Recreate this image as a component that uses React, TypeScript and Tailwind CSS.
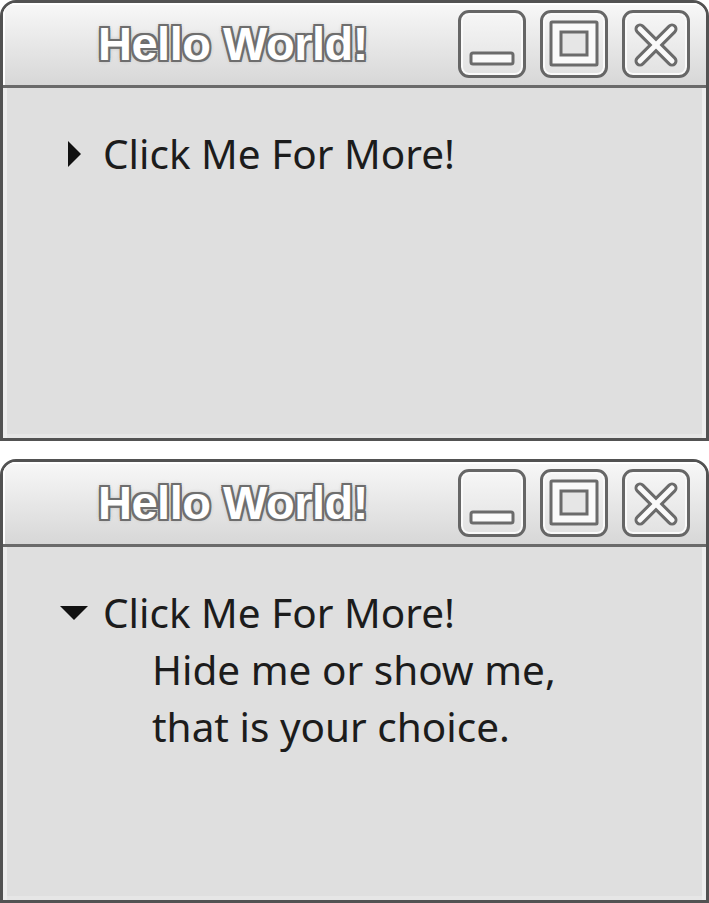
import React from 'react';

const outline =
  '[text-shadow:2px_0_0_#6e6e6e,-2px_0_0_#6e6e6e,0_2px_0_#6e6e6e,0_-2px_0_#6e6e6e,2px_2px_0_#6e6e6e,-2px_-2px_0_#6e6e6e,2px_-2px_0_#6e6e6e,-2px_2px_0_#6e6e6e,0_0_5px_#8a8a8a]';

function MinIcon() {
  return (
    <svg width="62" height="62" viewBox="0 0 62 62">
      <rect x="10" y="40" width="42" height="11" rx="2" fill="#fafafa" stroke="#6b6b6b" strokeWidth="3" />
    </svg>
  );
}

function MaxIcon() {
  return (
    <svg width="62" height="62" viewBox="0 0 62 62">
      <rect x="8" y="9" width="46" height="43" rx="1" fill="#fafafa" stroke="#6b6b6b" strokeWidth="3" />
      <rect x="18" y="19" width="26" height="23" fill="#e6e6e6" stroke="#6b6b6b" strokeWidth="3" />
    </svg>
  );
}

function CloseIcon() {
  return (
    <svg width="62" height="62" viewBox="0 0 62 62">
      <g stroke="#6b6b6b" strokeWidth="11" strokeLinecap="round">
        <line x1="15" y1="16" x2="47" y2="48" />
        <line x1="47" y1="16" x2="15" y2="48" />
      </g>
      <g stroke="#fafafa" strokeWidth="5" strokeLinecap="round">
        <line x1="15" y1="16" x2="47" y2="48" />
        <line x1="47" y1="16" x2="15" y2="48" />
      </g>
    </svg>
  );
}

function TitleButton({ children }: { children: React.ReactNode }) {
  return (
    <div className="w-[68px] h-[68px] rounded-[11px] border-[3px] border-[#666] bg-gradient-to-b from-[#f6f6f6] to-[#e2e2e2] flex items-center justify-center shadow-[inset_0_0_0_2px_#fafafa]">
      {children}
    </div>
  );
}

function Window({ expanded, className }: { expanded: boolean; className: string }) {
  return (
    <div className={`flex flex-col border-[3px] border-[#525252] rounded-t-[16px] overflow-hidden ${className}`}>
      <div className="h-[85px] shrink-0 flex items-center border-b-[3px] border-[#6a6a6a] bg-gradient-to-b from-[#f8f8f8] to-[#d7d7d7] shadow-[inset_2px_2px_0_#ffffff]">
        <span
          className={`pl-[95px] text-[47px] font-bold tracking-[-0.5px] text-white ${outline}`}
          style={{ fontFamily: '"Liberation Sans", Arial, sans-serif' }}
        >
          Hello World!
        </span>
        <div className="ml-auto mr-[16px] flex gap-[14px]">
          <TitleButton>
            <MinIcon />
          </TitleButton>
          <TitleButton>
            <MaxIcon />
          </TitleButton>
          <TitleButton>
            <CloseIcon />
          </TitleButton>
        </div>
      </div>
      <div
        className="flex-1 bg-[#dfdfdf] pt-[37px] text-[40.5px] leading-[57px] text-[#1c1c1c] shadow-[inset_4px_0_0_#ededed,inset_-4px_0_0_#ededed,inset_0_-4px_0_#e6e6e6]"
        style={{ fontFamily: '"Noto Sans", "Open Sans", sans-serif' }}
      >
        <div className="flex items-center pl-[55px]">
          <div className="w-[32px] flex justify-center">
            {expanded ? (
              <svg width="28" height="14" viewBox="0 0 28 14">
                <polygon points="0,0 28,0 14,14" fill="#111" />
              </svg>
            ) : (
              <svg width="13" height="26" viewBox="0 0 13 26">
                <polygon points="0,0 13,13 0,26" fill="#111" />
              </svg>
            )}
          </div>
          <span className="ml-[13px]">Click Me For More!</span>
        </div>
        {expanded && (
          <div className="pl-[149px]">
            <div>Hide me or show me,</div>
            <div>that is your choice.</div>
          </div>
        )}
      </div>
    </div>
  );
}

export default function App() {
  return (
    <div className="w-[709px] h-[903px] bg-white flex flex-col gap-[18px]">
      <Window expanded={false} className="h-[441px]" />
      <Window expanded className="h-[444px]" />
    </div>
  );
}
